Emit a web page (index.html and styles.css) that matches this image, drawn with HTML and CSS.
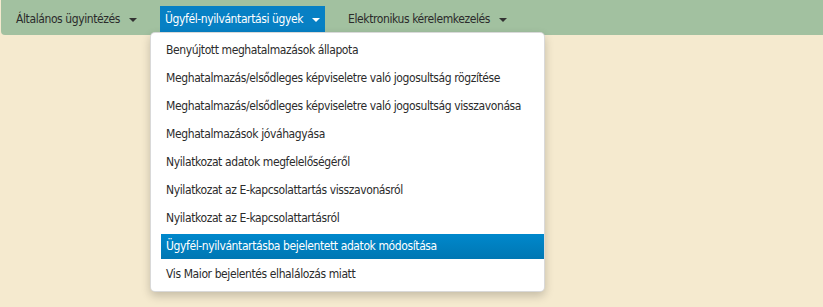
FILE: index.html
```html
<!DOCTYPE html>
<html lang="hu">
<head>
  <meta charset="UTF-8" />
  <meta name="viewport" content="width=device-width, initial-scale=1.0" />
  <title>Ügyintézés</title>
  <link rel="stylesheet" href="styles.css">
</head>
<body>
  <div class="page">
    <nav class="navbar">
      <div class="nav-item">
        <span class="nav-link">Általános ügyintézés <span class="caret"></span></span>
      </div>
      <div class="nav-item">
        <span class="nav-link active">Ügyfél-nyilvántartási ügyek <span class="caret"></span></span>
        <div class="dropdown">
          <div class="menu-item">Benyújtott meghatalmazások állapota</div>
          <div class="menu-item">Meghatalmazás/elsődleges képviseletre való jogosultság rögzítése</div>
          <div class="menu-item">Meghatalmazás/elsődleges képviseletre való jogosultság visszavonása</div>
          <div class="menu-item">Meghatalmazások jóváhagyása</div>
          <div class="menu-item">Nyilatkozat adatok megfelelőségéről</div>
          <div class="menu-item">Nyilatkozat az E-kapcsolattartás visszavonásról</div>
          <div class="menu-item">Nyilatkozat az E-kapcsolattartásról</div>
          <div class="menu-item selected">Ügyfél-nyilvántartásba bejelentett adatok módosítása</div>
          <div class="menu-item">Vis Maior bejelentés elhalálozás miatt</div>
        </div>
      </div>
      <div class="nav-item">
        <span class="nav-link">Elektronikus kérelemkezelés <span class="caret"></span></span>
      </div>
    </nav>
  </div>
</body>
</html>
```

FILE: styles.css
```css
html,
body {
  height: 100%;
}
body {
  margin: 0;
  background: #f5eacf;
  font-family: "DejaVu Sans Condensed", "Liberation Sans", Arial, sans-serif;
  font-size: 12px;
  letter-spacing: -0.4px;
  color: #2b2b2b;
}
.page {
  min-height: 100%;
}
.navbar {
  display: flex;
  gap: 18px;
  height: 35px;
  margin-left: 1px;
  padding-left: 10px;
  background: #a2c1a0;
  border-bottom-left-radius: 4px;
}
.nav-item {
  position: relative;
  padding-top: 6px;
}
.nav-link {
  display: flex;
  align-items: center;
  height: 26px;
  padding: 0 5px;
  color: #2b2b2b;
}
.nav-link.active {
  background: #0780c4;
  color: #fff;
}
.caret {
  display: inline-block;
  width: 0;
  height: 0;
  margin-left: 9px;
  margin-top: 1px;
  border-top: 4px solid #333;
  border-left: 4px solid transparent;
  border-right: 4px solid transparent;
}
.active .caret {
  border-top-color: #fff;
}
.dropdown {
  position: absolute;
  z-index: 10;
  top: 32px;
  left: -10px;
  width: 383px;
  padding: 5px 0 4px 10px;
  background: #fff;
  border: 1px solid rgba(0, 0, 0, 0.15);
  border-radius: 5px;
  box-shadow: 0 4px 10px rgba(0, 0, 0, 0.2);
}
.menu-item {
  height: 25px;
  line-height: 25px;
  margin-bottom: 3px;
  padding-left: 5px;
  white-space: nowrap;
}
.menu-item:last-child {
  margin-bottom: 0;
}
.menu-item.selected {
  background: linear-gradient(#0088cc, #0077b3);
  color: #fff;
}
```
